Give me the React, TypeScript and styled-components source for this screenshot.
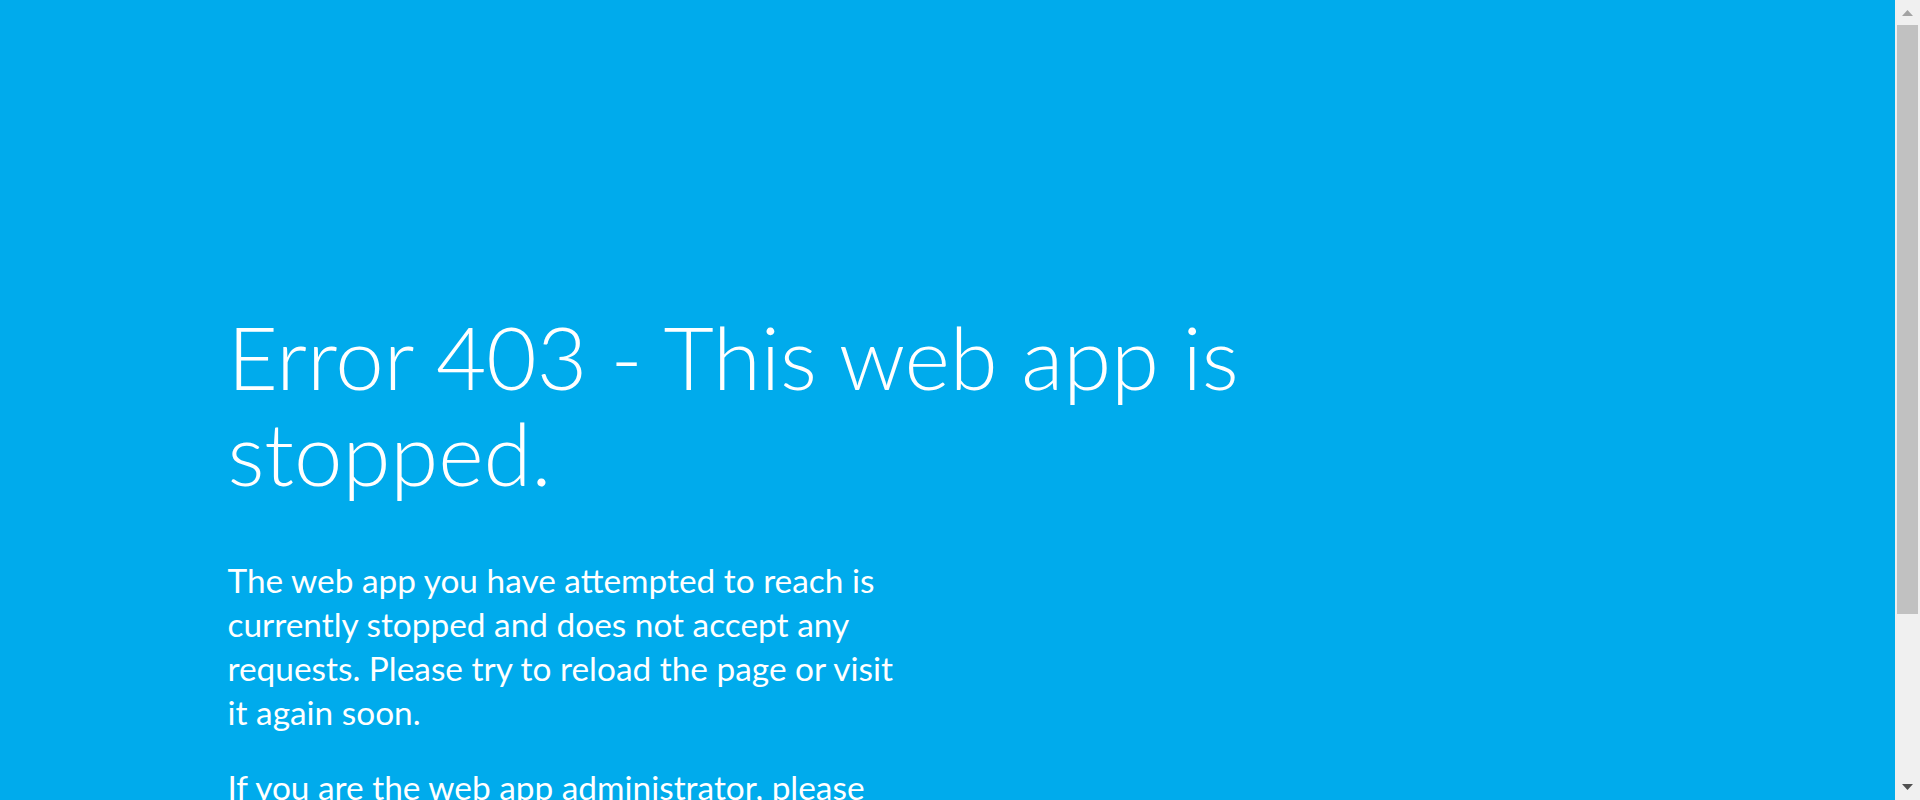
import React from 'react'
import styled, { createGlobalStyle } from 'styled-components'

const GlobalStyle = createGlobalStyle`
  html, body {
    margin: 0;
    height: 100%;
    overflow: hidden;
  }
  #root {
    height: 100%;
  }
`

const Page = styled.div`
  display: flex;
  height: 100vh;
  overflow: hidden;
`

const Viewport = styled.main`
  flex: 1;
  min-width: 0;
  background: #00abec;
  overflow: hidden;
`

const Feature = styled.div`
  width: 1440px;
  margin: 0 auto;
  padding-top: 309px;
`

const Content = styled.div`
  color: #ffffff;
  font-family: Lato, "Open Sans", sans-serif;
  font-size: 33.4px;
  line-height: 44px;
`

const Title = styled.h1`
  width: 1200px;
  margin: 0 0 57px 0;
  font-family: Lato, "Open Sans", sans-serif;
  font-weight: 300;
  font-size: 87px;
  line-height: 96px;
  letter-spacing: -0.1px;
`

const Text = styled.p`
  max-width: 672px;
  margin: 0 0 31px 0;

  a,
  a:visited {
    color: #ffffff;
  }
`

// fake browser scrollbar on the right edge
const ScrollBar = styled.div`
  width: 25px;
  flex: none;
  display: flex;
  flex-direction: column;
  background: #f0f0f0;
`

const ArrowButton = styled.div<{ $down?: boolean }>`
  height: 25px;
  flex: none;
  display: flex;
  justify-content: center;
  align-items: ${({ $down }) => ($down ? 'flex-start' : 'flex-end')};
  padding: ${({ $down }) => ($down ? '9px 0 0' : '0 0 9px')};
  box-sizing: border-box;
`

const Track = styled.div`
  flex: 1;
  padding: 0 2px;
`

const Thumb = styled.div`
  height: 589px;
  background: #c1c1c1;
`

function Arrow({ down }: { down?: boolean }) {
  return (
    <svg width="11" height="6" viewBox="0 0 11 6">
      {down ? (
        <polygon points="0,0 11,0 5.5,6" fill="#505050" />
      ) : (
        <polygon points="5.5,0 11,6 0,6" fill="#a3a3a3" />
      )}
    </svg>
  )
}

function App(): JSX.Element {
  return (
    <>
      <GlobalStyle />
      <Page>
        <Viewport>
          <Feature>
            <Content>
              <Title>Error 403 - This web app is stopped.</Title>
              <Text>
                The web app you have attempted to reach is currently stopped and does not accept any
                requests. Please try to reload the page or visit it again soon.
              </Text>
              <Text>
                If you are the web app administrator, please find the common 403 error scenarios and
                resolution <a href="#">here</a>. For further troubleshooting tools and recommendations,
                please visit <a href="#">Azure Portal</a>.
              </Text>
            </Content>
          </Feature>
        </Viewport>
        <ScrollBar>
          <ArrowButton>
            <Arrow />
          </ArrowButton>
          <Track>
            <Thumb />
          </Track>
          <ArrowButton $down>
            <Arrow down />
          </ArrowButton>
        </ScrollBar>
      </Page>
    </>
  )
}

export default App
